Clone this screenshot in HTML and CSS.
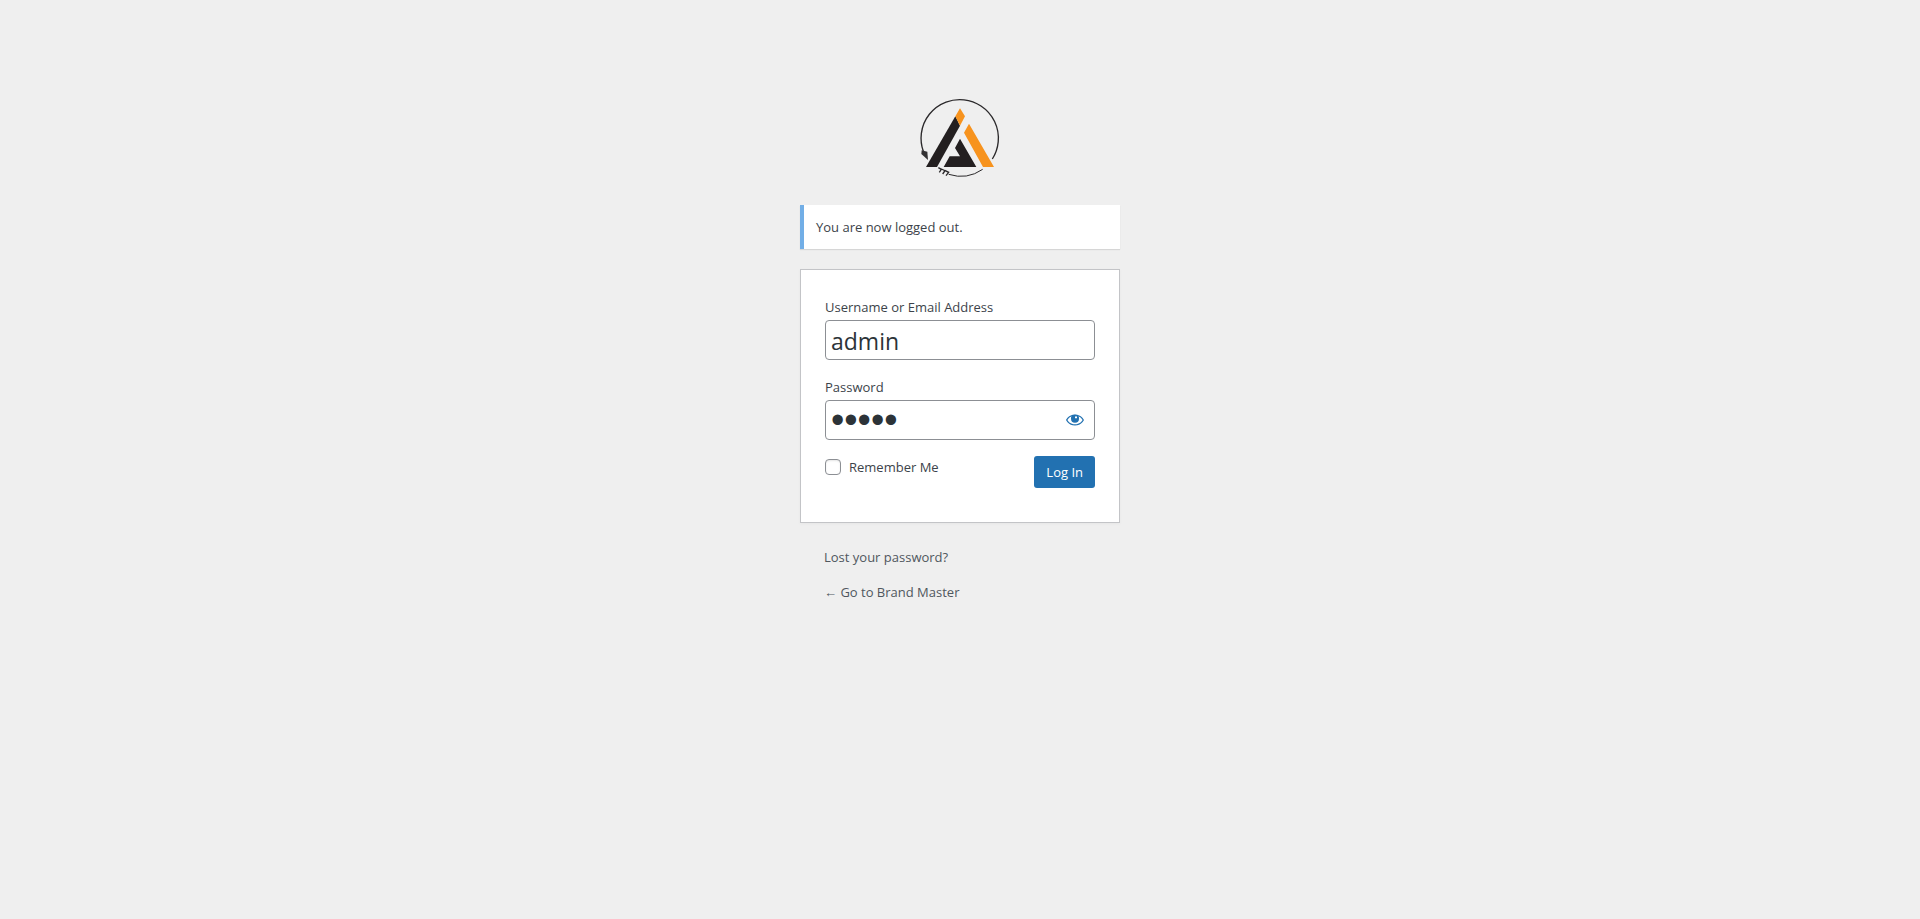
FILE: index.html
```html
<!DOCTYPE html>
<html lang="en">
<head>
<meta charset="utf-8">
<meta name="viewport" content="width=device-width, initial-scale=1">
<title>Log In</title>
<link rel="stylesheet" href="styles.css">
</head>
<body>
<main class="login">
  <a class="logo" href="#" aria-label="Brand Master">
    <svg viewBox="24 18 252 252" aria-hidden="true">
      <g fill="none" stroke="#2b292b" stroke-width="4">
        <path d="M40 184A116 116 0 1 1 247 207"/>
        <path d="M218 238A117 117 0 0 1 116 253" stroke-width="3"/>
        <path d="M85 233l9 5-6 9M94 237l11 5-7 10M104 241l12 6-8 10"/>
      </g>
      <path fill="#333133" d="M35 181l17 4 2 25-20-18z"/>
      <path fill="#231f20" d="M136 79l14 28-69 124H48z"/>
      <path fill="#f7931e" d="M150 55l15 24-15 28-14-28zM177 101l75 130h-33l-57-103z"/>
      <path fill="#231f20" d="M150 146l49 85h-98l18-32h31l-15-25z"/>
    </svg>
  </a>
  <p class="message">You are now logged out.</p>
  <form class="form">
    <label class="label" for="user">Username or Email Address</label>
    <input class="input" id="user" type="text" value="admin">
    <label class="label" for="pass">Password</label>
    <div class="password">
      <input class="input" id="pass" type="password" value="admin">
      <button class="reveal" type="button" aria-label="Show password">
        <svg viewBox="0 0 20 20" aria-hidden="true"><path fill="currentColor" fill-rule="evenodd" d="M10 4.400C3.400 4.400 1 10 1 10s2.400 5.600 9 5.600S19 10 19 10s-2.400-5.600-9-5.600zM10 14.300C5.500 14.300 3.200 11.300 2.400 10 3 9 4.400 7 6.800 6.200A4 4 0 0 0 6 8.800a4 4 0 0 0 8 0 4 4 0 0 0-.8-2.600C15.600 7 17 9 17.600 10c-.8 1.300-3.100 4.300-7.600 4.300zM10 6.300h2v2h-2z"/><path fill="currentColor" d="M7 5.400Q10 4.200 13 5.400L14 8.300 12 8.300V6.300H10V8.300L6 8.300z"/></svg>
      </button>
    </div>
    <div class="actions">
      <label class="remember"><input class="check" type="checkbox">Remember Me</label>
      <button class="submit" type="submit">Log In</button>
    </div>
  </form>
  <nav class="links">
    <a class="link" href="#">Lost your password?</a>
    <a class="link" href="#">← Go to Brand Master</a>
  </nav>
</main>
</body>
</html>
```
FILE: styles.css
```css
* {
  box-sizing: border-box;
}

body {
  margin: 0;
  min-height: 100vh;
  background: #efefef;
  color: #3c434a;
  font: 13px/20px "Open Sans", "Noto Sans", sans-serif;
}

.login {
  width: 100%;
  max-width: 320px;
  margin: 0 auto;
  padding: 96px 0 24px;
}

.logo {
  display: block;
  width: 84px;
  margin: 0 auto 25px;
}

.logo svg {
  display: block;
}

.message {
  margin: 0 0 20px;
  padding: 12px;
  border-left: 4px solid #72aee6;
  background: #fff;
  box-shadow: 0 1px 1px rgba(0, 0, 0, 0.1);
}

.form {
  padding: 26px 24px 34px;
  border: 1px solid #c3c4c7;
  background: #fff;
  box-shadow: 0 1px 3px rgba(0, 0, 0, 0.04);
}

.label {
  display: block;
  margin-bottom: 1px;
  line-height: 23px;
}

.input {
  display: block;
  width: 100%;
  height: 40px;
  margin: 0 0 16px;
  padding: 2px 5px 0;
  border: 1px solid #8c8f94;
  border-radius: 4px;
  background: #fff;
  color: #2c3338;
  font-family: inherit;
  font-size: 23px;
}

.password {
  position: relative;
}

.password .input {
  padding: 0 40px 0 5px;
  font-family: "Liberation Sans", Arial, sans-serif;
  font-size: 38px;
}

.reveal {
  position: absolute;
  top: 0;
  right: 0;
  display: flex;
  align-items: center;
  justify-content: center;
  width: 40px;
  height: 40px;
  padding: 0;
  border: 0;
  background: none;
  color: #2271b1;
}

.reveal svg {
  width: 20px;
  height: 20px;
}

.actions {
  display: flex;
  align-items: flex-start;
  justify-content: space-between;
}

.remember {
  display: flex;
  align-items: center;
  gap: 8px;
  line-height: 22px;
}

.check {
  appearance: none;
  width: 16px;
  height: 16px;
  margin: 0;
  border: 1px solid #8c8f94;
  border-radius: 4px;
  background: #fff;
  box-shadow: inset 0 1px 2px rgba(0, 0, 0, 0.1);
}

.submit {
  height: 32px;
  padding: 0 12px;
  border: 0;
  border-radius: 3px;
  background: #2271b1;
  color: #fff;
  font: inherit;
}

.links {
  display: flex;
  flex-direction: column;
  align-items: flex-start;
  gap: 16px;
  padding: 25px 24px 0;
  line-height: 19px;
}

.link {
  color: #50575e;
  text-decoration: none;
}
```
